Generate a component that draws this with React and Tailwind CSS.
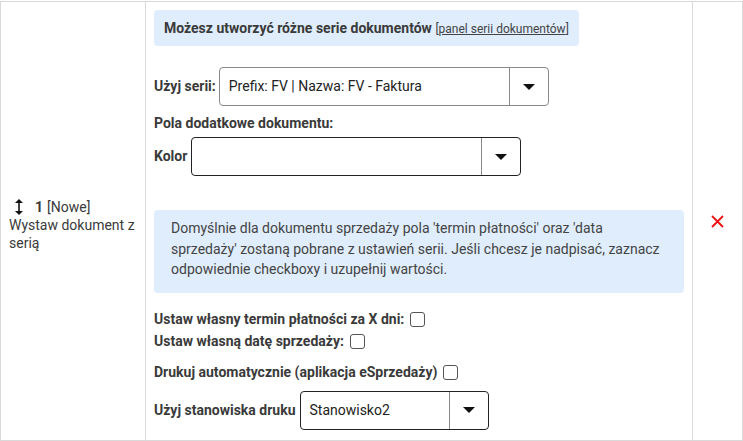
import React from "react";

function Caret() {
   return (
      <svg width="12" height="6" viewBox="0 0 12 6" className="block">
         <path d="M0 0 L12 0 L6 6 Z" fill="#111" />
      </svg>
   );
}

function SelectBox({ value, width, dark }) {
   return (
      <div className={`flex h-[39px] rounded-[4px] border bg-white ${dark ? "border-[#222]" : "border-[#8a8a8a]"} ${width}`}>
         <div className="flex-1 flex items-center pl-[9px] text-[14px] text-[#222] truncate">{value}</div>
         <div className="w-[39px] border-l border-[#8a8a8a] flex items-center justify-center">
            <Caret />
         </div>
      </div>
   );
}

function Checkbox() {
   return <span className="inline-block w-[15px] h-[15px] rounded-[3px] border border-[#555] bg-white ml-[6px]" />;
}

export default function App() {
   return (
      <div className="w-[743px] h-[441px] bg-white pt-px font-['Roboto',sans-serif] text-[#3a3a3a]">
         <div className="flex h-[440px] border-t border-b border-r border-l border-[#d9d9d9]">
            {/* lewa kolumna */}
            <div className="w-[145px] border-r border-[#d9d9d9] flex items-center pl-[8px] pr-2">
               <div className="text-[14px] leading-[18px] pt-[8px]">
                  <div className="flex items-center">
                     <svg width="12" height="16" viewBox="0 0 12 16" className="ml-[4px] mr-[10px]">
                        <path d="M6 2 L6 14" stroke="#111" strokeWidth="1.6" />
                        <path d="M2 4 L6 0 L10 4 Z" fill="#111" />
                        <path d="M2 12 L6 16 L10 12 Z" fill="#111" />
                     </svg>
                     <b className="font-bold mr-1">1</b>
                     <span>[Nowe]</span>
                  </div>
                  <div>Wystaw dokument z serią</div>
               </div>
            </div>

            {/* srodkowa kolumna */}
            <div className="flex-1 border-r border-[#d9d9d9] pl-[8px] pr-[8px] pt-[8px]">
               <div className="inline-block bg-[#dfedfd] rounded-[4px] px-[10px] h-[36px] leading-[36px] text-[14px] whitespace-nowrap">
                  <b className="font-bold">Możesz utworzyć różne serie dokumentów</b>{" "}
                  <span className="text-[12px] text-[#444]">
                     [<span className="underline">panel serii dokumentów</span>]
                  </span>
               </div>

               <div className="flex items-center mt-[21px]">
                  <span className="font-bold text-[14px] mr-[3px]">Użyj serii:</span>
                  <SelectBox value="Prefix: FV | Nazwa: FV - Faktura" width="w-[330px]" />
               </div>

               <div className="font-bold text-[14px] leading-[20px] mt-[7px]">Pola dodatkowe dokumentu:</div>

               <div className="flex items-center mt-[4px]">
                  <span className="font-bold text-[14px] mr-[4px]">Kolor</span>
                  <SelectBox value="" width="w-[330px]" dark />
               </div>

               <div className="bg-[#dfedfd] rounded-[4px] mt-[34px] pl-[17px] pr-[17px] pt-[8px] pb-[13px] text-[14px] leading-[20.5px] text-[#444]">
                  Domyślnie dla dokumentu sprzedaży pola 'termin płatności' oraz 'data sprzedaży' zostaną pobrane z ustawień serii. Jeśli chcesz je nadpisać, zaznacz odpowiednie checkboxy i uzupełnij wartości.
               </div>

               <div className="mt-[17px] text-[14px] font-bold">
                  <div className="flex items-center h-[20px]">
                     Ustaw własny termin płatności za X dni:
                     <Checkbox />
                  </div>
                  <div className="flex items-center h-[20px] mt-[2px]">
                     Ustaw własną datę sprzedaży:
                     <Checkbox />
                  </div>
                  <div className="flex items-center h-[20px] mt-[11px]">
                     Drukuj automatycznie (aplikacja eSprzedaży)
                     <Checkbox />
                  </div>
                  <div className="flex items-center mt-[8px]">
                     <span className="mr-[4px]">Użyj stanowiska druku</span>
                     <div className="font-normal">
                        <SelectBox value="Stanowisko2" width="w-[189px]" dark />
                     </div>
                  </div>
               </div>
            </div>

            {/* prawa kolumna */}
            <div className="w-[49px] flex items-center justify-center">
               <svg width="13" height="13" viewBox="0 0 13 13">
                  <path d="M1 1 L12 12 M12 1 L1 12" stroke="#ee1111" strokeWidth="1.8" />
               </svg>
            </div>
         </div>
      </div>
   );
}
